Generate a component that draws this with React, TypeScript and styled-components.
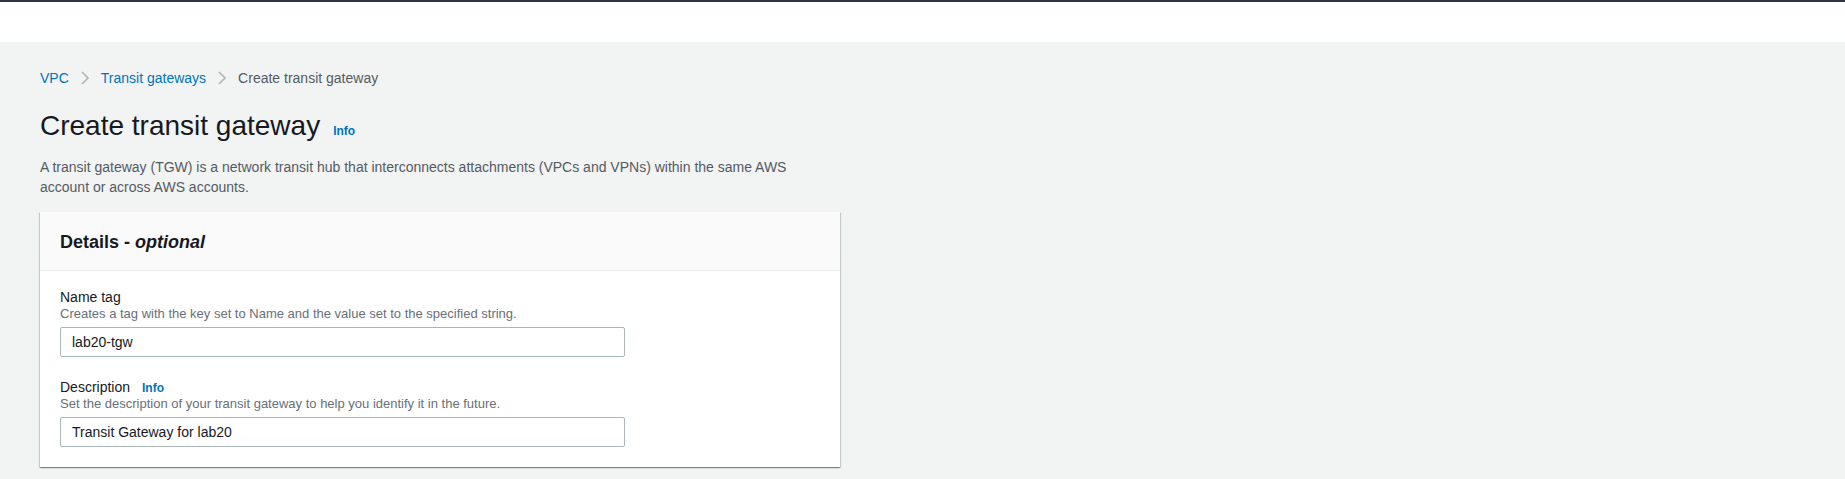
import React from "react";
import styled, { createGlobalStyle } from "styled-components";

const GlobalStyle = createGlobalStyle`
  html, body {
    margin: 0;
    padding: 0;
    background: #f2f3f3;
    font-family: "Liberation Sans", Arial, sans-serif;
    -webkit-font-smoothing: antialiased;
  }
  * { box-sizing: border-box; }
`;

const Page = styled.div`
  min-height: 479px;
  background: #f2f3f3;
`;

const TopNav = styled.header`
  height: 42px;
  background: #ffffff;
  border-top: 2px solid #2c3745;
`;

const Main = styled.main`
  padding: 26px 0 0 40px;
  width: 840px;
`;

const Breadcrumbs = styled.nav`
  display: flex;
  align-items: center;
  height: 20px;
  font-size: 14px;
  line-height: 20px;
`;

const Crumb = styled.a<{ $current?: boolean }>`
  color: ${(p) => (p.$current ? "#545b64" : "#0073bb")};
  text-decoration: none;
  cursor: ${(p) => (p.$current ? "default" : "pointer")};
`;

const Sep = styled.span`
  display: inline-flex;
  width: 16px;
  height: 16px;
  margin: 0 8px;
  color: #aab7b8;
`;

const TitleRow = styled.div`
  display: flex;
  align-items: baseline;
  gap: 13px;
  margin-top: 20px;
`;

const Title = styled.h1`
  margin: 0;
  font-size: 28px;
  line-height: 36px;
  font-weight: 400;
  color: #16191f;
`;

const InfoLink = styled.a`
  font-size: 12px;
  font-weight: 700;
  color: #0073bb;
  text-decoration: none;
  cursor: pointer;
`;

const Lead = styled.p`
  margin: 13px 0 0;
  max-width: 780px;
  font-size: 14px;
  line-height: 20px;
  color: #545b64;
`;

const Card = styled.section`
  margin-top: 15px;
  width: 800px;
  background: #ffffff;
  box-shadow: 0 1px 1px 0 rgba(0, 28, 36, 0.3),
    1px 1px 1px 0 rgba(0, 28, 36, 0.15),
    -1px 1px 1px 0 rgba(0, 28, 36, 0.15);
`;

const CardHeader = styled.div`
  background: #fafafa;
  border-bottom: 1px solid #eaeded;
  padding: 19px 20px 17px;
`;

const CardTitle = styled.h2`
  margin: 0;
  font-size: 18px;
  line-height: 22px;
  font-weight: 700;
  color: #16191f;

  em {
    font-style: italic;
  }
`;

const CardBody = styled.div`
  padding: 16px 20px 20px;
  display: flex;
  flex-direction: column;
  gap: 20px;
`;

const Field = styled.div`
  display: flex;
  flex-direction: column;
`;

const LabelRow = styled.div`
  display: flex;
  align-items: baseline;
  gap: 12px;
`;

const Label = styled.label`
  font-size: 14px;
  line-height: 20px;
  color: #16191f;
`;

const Help = styled.div`
  font-size: 13px;
  line-height: 14px;
  color: #687078;
`;

const Input = styled.input`
  margin-top: 6px;
  width: 565px;
  height: 30px;
  padding: 4px 11px;
  border: 1px solid #aab7b8;
  border-radius: 2px;
  background: #ffffff;
  font-family: "Liberation Sans", Arial, sans-serif;
  font-size: 14px;
  line-height: 20px;
  color: #16191f;
  outline: none;
`;

const Chevron = () => (
  <Sep>
    <svg width="16" height="16" viewBox="0 0 16 16" fill="none">
      <path d="M5 2l6 6-6 6" stroke="currentColor" strokeWidth="1.6" />
    </svg>
  </Sep>
);

export default function App() {
  return (
    <Page>
      <GlobalStyle />
      <TopNav />
      <Main>
        <Breadcrumbs>
          <Crumb>VPC</Crumb>
          <Chevron />
          <Crumb>Transit gateways</Crumb>
          <Chevron />
          <Crumb $current>Create transit gateway</Crumb>
        </Breadcrumbs>
        <TitleRow>
          <Title>Create transit gateway</Title>
          <InfoLink>Info</InfoLink>
        </TitleRow>
        <Lead>
          A transit gateway (TGW) is a network transit hub that interconnects
          attachments (VPCs and VPNs) within the same AWS account or across AWS
          accounts.
        </Lead>
        <Card>
          <CardHeader>
            <CardTitle>
              Details - <em>optional</em>
            </CardTitle>
          </CardHeader>
          <CardBody>
            <Field>
              <Label>Name tag</Label>
              <Help>
                Creates a tag with the key set to Name and the value set to the
                specified string.
              </Help>
              <Input defaultValue="lab20-tgw" />
            </Field>
            <Field>
              <LabelRow>
                <Label>Description</Label>
                <InfoLink>Info</InfoLink>
              </LabelRow>
              <Help>
                Set the description of your transit gateway to help you identify
                it in the future.
              </Help>
              <Input defaultValue="Transit Gateway for lab20" />
            </Field>
          </CardBody>
        </Card>
      </Main>
    </Page>
  );
}
